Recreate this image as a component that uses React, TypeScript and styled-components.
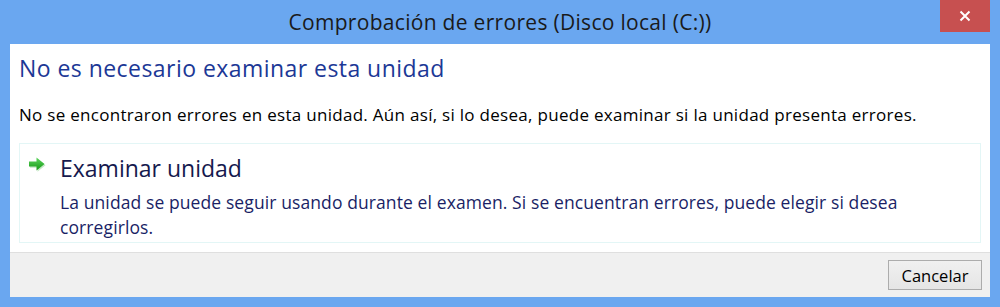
import React from "react";
import styled, { createGlobalStyle } from "styled-components";

const Global = createGlobalStyle`
  html, body {
    margin: 0;
    padding: 0;
    background: #6aa7f0;
  }
  * { box-sizing: border-box; }
`;

const Window = styled.div`
  width: 1000px;
  height: 307px;
  background: #6aa7f0;
  display: flex;
  flex-direction: column;
  padding: 0 10px 10px 10px;
  font-family: "Open Sans", "Noto Sans", "Liberation Sans", sans-serif;
`;

const TitleBar = styled.div`
  height: 45px;
  position: relative;
  display: flex;
  align-items: center;
  justify-content: center;
`;

const Title = styled.div`
  font-size: 21px;
  letter-spacing: 0.3px;
  line-height: 28px;
  color: #1a1a1a;
`;

const CloseButton = styled.div`
  position: absolute;
  top: 0;
  right: 0;
  width: 50px;
  height: 32px;
  background: #c75050;
  display: flex;
  align-items: center;
  justify-content: center;
`;

const Client = styled.div`
  flex: 1;
  display: flex;
  flex-direction: column;
  background: #ffffff;
`;

const Content = styled.div`
  flex: 1;
  padding: 9px 9px 0 9px;
  display: flex;
  flex-direction: column;
`;

const Heading = styled.div`
  font-size: 23px;
  letter-spacing: 0.45px;
  color: #1c3896;
  line-height: 30px;
`;

const Body = styled.div`
  font-size: 17px;
  letter-spacing: 0.29px;
  color: #000;
  margin-top: 20px;
  line-height: 23px;
`;

const Option = styled.div`
  margin-top: 17px;
  height: 100px;
  border: 1px solid #e3f6f6;
  display: flex;
  padding: 9px 10px 0 8px;
  gap: 14px;
`;

const ArrowBox = styled.div`
  width: 18px;
  padding-top: 3px;
`;

const OptionText = styled.div`
  display: flex;
  flex-direction: column;
`;

const OptionTitle = styled.div`
  font-size: 23px;
  color: #15194e;
  line-height: 31px;
`;

const OptionDesc = styled.div`
  font-size: 17.5px;
  letter-spacing: 0.1px;
  color: #1a1f66;
  line-height: 25px;
  margin-top: 6px;
  width: 880px;
`;

const Footer = styled.div`
  height: 45px;
  background: #f0f0f0;
  border-top: 1px solid #dfdfdf;
  display: flex;
  justify-content: flex-end;
  align-items: flex-start;
  padding: 7px 8px 0 0;
  margin-top: 9px;
`;

const Button = styled.div`
  width: 94px;
  height: 30px;
  border: 1px solid #acacac;
  background: linear-gradient(#f0f0f0, #e5e5e5);
  display: flex;
  align-items: center;
  justify-content: center;
  font-size: 16.5px;
  color: #000;
`;

const GreenArrow = () => (
  <svg width="18" height="16" viewBox="0 0 18 16">
    <defs>
      <linearGradient id="ga" x1="0" y1="0" x2="0" y2="1">
        <stop offset="0" stopColor="#5fd65f" />
        <stop offset="1" stopColor="#129612" />
      </linearGradient>
    </defs>
    <path d="M2 5.8 L9.5 5.8 L9.5 1.8 L17.5 8.3 L9.5 14.8 L9.5 10.8 L2 10.8 Z" fill="#c4e8c4" />
    <path d="M1 4.6 L8.5 4.6 L8.5 0.6 L16.5 7.1 L8.5 13.6 L8.5 9.6 L1 9.6 Z" fill="url(#ga)" />
  </svg>
);

const App: React.FC = () => (
  <>
    <Global />
    <Window>
      <TitleBar>
        <Title>Comprobación de errores (Disco local (C:))</Title>
        <CloseButton>
          <svg width="12" height="12" viewBox="0 0 12 12">
            <path d="M1.5 1.5 L10.5 10.5 M10.5 1.5 L1.5 10.5" stroke="#fff" strokeWidth="2" />
          </svg>
        </CloseButton>
      </TitleBar>
      <Client>
        <Content>
          <Heading>No es necesario examinar esta unidad</Heading>
          <Body>
            No se encontraron errores en esta unidad. Aún así, si lo desea, puede examinar si la unidad presenta errores.
          </Body>
          <Option>
            <ArrowBox>
              <GreenArrow />
            </ArrowBox>
            <OptionText>
              <OptionTitle>Examinar unidad</OptionTitle>
              <OptionDesc>
                La unidad se puede seguir usando durante el examen. Si se encuentran errores, puede elegir si desea corregirlos.
              </OptionDesc>
            </OptionText>
          </Option>
        </Content>
        <Footer>
          <Button>Cancelar</Button>
        </Footer>
      </Client>
    </Window>
  </>
);

export default App;
